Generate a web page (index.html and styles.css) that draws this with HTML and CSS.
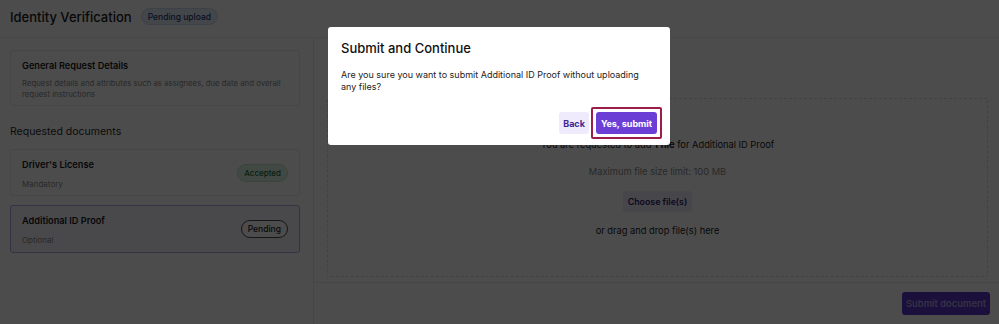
FILE: index.html
```html
<!DOCTYPE html>
<html lang="en">
<head>
<meta charset="utf-8">
<title>Identity Verification</title>
<link rel="stylesheet" href="styles.css">
</head>
<body>
<div class="page">
  <header class="header">
    <h1 class="title">Identity Verification</h1>
    <span class="badge badge-blue">Pending upload</span>
  </header>
  <div class="main">
    <aside class="side">
      <div class="card">
        <div class="card-title">General Request Details</div>
        <div class="card-desc">Request details and attributes such as assignees, due date and overall request instructions</div>
      </div>
      <div class="section-label">Requested documents</div>
      <div class="doc">
        <div class="doc-text">
          <div class="card-title">Driver's License</div>
          <div class="doc-sub">Mandatory</div>
        </div>
        <span class="badge badge-green">Accepted</span>
      </div>
      <div class="doc doc-selected">
        <div class="doc-text">
          <div class="card-title">Additional ID Proof</div>
          <div class="doc-sub">Optional</div>
        </div>
        <span class="badge badge-outline">Pending</span>
      </div>
    </aside>
    <section class="content">
      <div class="content-body">
        <div class="content-head"></div>
        <div class="dropzone">
          <p class="dz-line">You are requested to add <b>1 file</b> for Additional ID Proof</p>
          <p class="dz-limit">Maximum file size limit: 100 MB</p>
          <button class="btn-light">Choose file(s)</button>
          <p class="dz-line">or drag and drop file(s) here</p>
        </div>
      </div>
      <div class="footer">
        <button class="btn-submit">Submit document</button>
      </div>
    </section>
  </div>
</div>
<div class="overlay">
  <div class="modal">
    <h2 class="modal-title">Submit and Continue</h2>
    <p class="modal-text">Are you sure you want to submit Additional ID Proof without uploading any files?</p>
    <div class="modal-actions">
      <button class="btn-back">Back</button>
      <span class="focus-ring"><button class="btn-primary">Yes, submit</button></span>
    </div>
  </div>
</div>
</body>
</html>
```

FILE: styles.css
```css
* { box-sizing: border-box; }
html, body { margin: 0; padding: 0; }
body {
  width: 999px;
  height: 324px;
  overflow: hidden;
  background: #ffffff;
  font-family: Inter, "Liberation Sans", sans-serif;
  color: #1a1a1a;
}
.page { height: 324px; display: flex; flex-direction: column; }
.header {
  height: 38px;
  display: flex;
  align-items: center;
  gap: 9px;
  padding: 0 10px 4px;
  border-bottom: 1px solid #ededed;
}
.title { margin: 0; font-size: 13px; font-weight: 500; }
.badge {
  display: inline-flex;
  align-items: center;
  height: 17px;
  padding: 0 6px;
  border-radius: 9px;
  font-size: 8.5px;
  font-weight: 500;
}
.badge-blue { background: #e3edf9; border: 1px solid #c9d9ee; color: #1d3576; }
.badge-green { height: 18px; padding: 0 6px; background: #dcf3e4; border: 1px solid #bfe5cc; color: #1c6b3a; font-size: 8px; }
.badge-outline { height: 18px; padding: 0 6px; background: #fff; border: 1px solid #4a4a4a; color: #222; font-size: 8.5px; }
.main { flex: 1; display: flex; }
.side {
  width: 314px;
  padding: 12px 13px 0 10px;
  border-right: 1px solid #ececec;
  display: flex;
  flex-direction: column;
}
.card {
  border: 1px solid #ececec;
  border-radius: 3px;
  padding: 9px 11px 5px;
}
.card-title { font-size: 9.2px; line-height: 12px; font-weight: 600; color: #1a1a1a; }
.card-desc { margin-top: 6px; font-size: 7.8px; line-height: 11px; color: #8a8a8a; }
.section-label { margin-top: 20px; margin-bottom: 11px; font-size: 10.5px; line-height: 12px; color: #2a2a2a; }
.doc {
  height: 47px;
  border: 1px solid #ececec;
  border-radius: 3px;
  padding: 0 11px;
  display: flex;
  align-items: center;
  justify-content: space-between;
  margin-bottom: 9px;
}
.doc-selected { height: 48px; background: #f3f4fd; border-color: #a7aae6; }
.doc-text { display: flex; flex-direction: column; gap: 8px; padding-top: 2px; }
.doc-sub { font-size: 8px; line-height: 10px; color: #8a8a8a; }
.content { flex: 1; display: flex; flex-direction: column; }
.content-body { flex: 1; padding: 8px 11px 5px 13px; display: flex; flex-direction: column; }
.content-head { height: 52px; }
.dropzone {
  flex: 1;
  border: 1px dashed #dcdcdc;
  border-radius: 2px;
  display: flex;
  flex-direction: column;
  align-items: center;
  padding-top: 40px;
}
.dz-line { margin: 0; font-size: 9.3px; line-height: 12px; color: #1a1a1a; }
.dz-line b { font-weight: 700; }
.dz-limit { margin: 15px 0 13px; font-size: 9.3px; line-height: 12px; color: #8a8a8a; }
.btn-light {
  height: 21px;
  padding: 0 5px;
  border: none;
  border-radius: 3px;
  background: #efebfb;
  color: #2d2170;
  font-family: inherit;
  font-size: 8.8px;
  font-weight: 600;
  margin-bottom: 13px;
}
.footer {
  height: 42px;
  border-top: 1px solid #ececec;
  display: flex;
  align-items: center;
  justify-content: flex-end;
  padding: 0 9px 0 0;
}
.btn-submit {
  height: 23px;
  padding: 0 4px;
  border: none;
  border-radius: 3px;
  background: #5a36c8;
  color: rgba(255, 255, 255, 0.55);
  font-family: inherit;
  font-size: 9.4px;
  font-weight: 600;
}
.overlay {
  position: fixed;
  inset: 0;
  background: rgba(0, 0, 0, 0.7);
}
.modal {
  position: absolute;
  left: 328px;
  top: 27px;
  width: 342px;
  height: 118px;
  background: #fff;
  border-radius: 3px;
  padding: 12px 8px 0 13px;
  display: flex;
  flex-direction: column;
}
.modal-title { margin: 0; font-size: 13px; font-weight: 500; color: #111; line-height: 18px; }
.modal-text { margin: 12px 0 0; font-size: 9px; line-height: 12px; color: #222; padding-right: 14px; }
.modal-actions {
  margin-top: 14px;
  display: flex;
  align-items: center;
  justify-content: flex-end;
  gap: 2px;
}
.btn-back, .btn-primary {
  height: 22px;
  border: none;
  border-radius: 3px;
  font-family: inherit;
  font-size: 9px;
  font-weight: 700;
}
.btn-back { padding: 0 4px; background: #efeafc; color: #3b2894; }
.focus-ring {
  display: inline-flex;
  padding: 3px;
  border: 2px solid #9b1d4a;
  border-radius: 2px;
}
.btn-primary {
  padding: 0 5px;
  background: #6b3fd6;
  color: #fff;
}
```
